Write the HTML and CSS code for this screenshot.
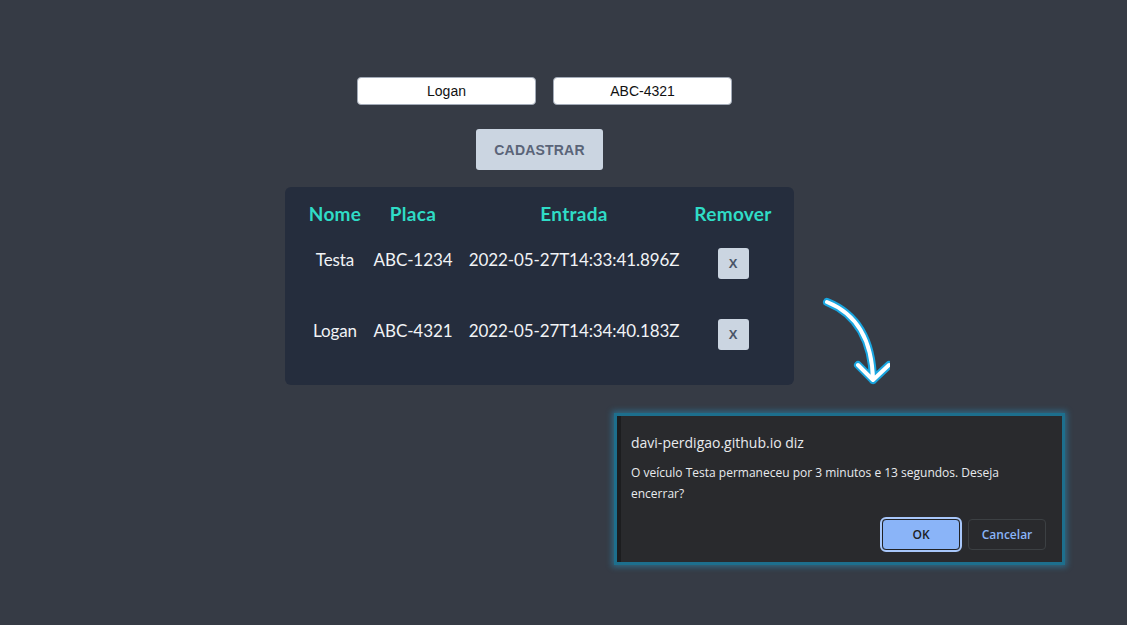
FILE: index.html
```html
<!DOCTYPE html>
<html lang="pt-BR">
<head>
<meta charset="utf-8">
<title>Estacionamento</title>
<link rel="stylesheet" href="styles.css">
</head>
<body>
<main class="page">
  <div class="form-row">
    <input class="field" type="text" value="Logan">
    <input class="field" type="text" value="ABC-4321">
  </div>
  <button class="btn-register">CADASTRAR</button>
  <section class="table">
    <div class="row head">
      <div class="cell">Nome</div>
      <div class="cell">Placa</div>
      <div class="cell">Entrada</div>
      <div class="cell">Remover</div>
    </div>
    <div class="row">
      <div class="cell">Testa</div>
      <div class="cell">ABC-1234</div>
      <div class="cell">2022-05-27T14:33:41.896Z</div>
      <div class="cell"><button class="btn-x">X</button></div>
    </div>
    <div class="row">
      <div class="cell">Logan</div>
      <div class="cell">ABC-4321</div>
      <div class="cell">2022-05-27T14:34:40.183Z</div>
      <div class="cell"><button class="btn-x">X</button></div>
    </div>
  </section>
</main>

<svg class="arrow" width="90" height="100" viewBox="0 0 90 100">
  <g fill="none" stroke-linecap="round" stroke-linejoin="round">
    <path d="M27 12 C52 22 72 44 73 90 M58 75 L73 90 L89 75" stroke="#1aa6e0" stroke-width="8"/>
    <path d="M27 12 C52 22 72 44 73 90 M58 75 L73 90 L89 75" stroke="#ffffff" stroke-width="4"/>
  </g>
</svg>

<div class="dialog">
  <div class="dialog-title">davi-perdigao.github.io diz</div>
  <div class="dialog-msg">O veículo Testa permaneceu por 3 minutos e 13 segundos. Deseja encerrar?</div>
  <div class="dialog-actions">
    <button class="btn-ok">OK</button>
    <button class="btn-cancel">Cancelar</button>
  </div>
</div>
</body>
</html>
```

FILE: styles.css
```css
html, body {
  margin: 0;
  padding: 0;
}
body {
  background: #363b45;
  width: 1127px;
  height: 625px;
  overflow: hidden;
  position: relative;
  font-family: "Liberation Sans", Arial, sans-serif;
}
.page {
  width: 1079px;
  display: flex;
  flex-direction: column;
  align-items: center;
  padding-top: 77px;
}
.form-row {
  display: flex;
  gap: 17px;
  padding-left: 10px;
}
.field {
  width: 179px;
  height: 28px;
  box-sizing: border-box;
  border: 1px solid #a3abb8;
  border-radius: 4px;
  background: #ffffff;
  text-align: center;
  font-family: "Liberation Sans", Arial, sans-serif;
  font-size: 14px;
  color: #111;
  padding: 0;
  outline: none;
}
.btn-register {
  margin-top: 24px;
  width: 127px;
  height: 41px;
  border: none;
  border-radius: 3px;
  background: #cbd5e1;
  color: #5a6478;
  font-family: "Liberation Sans", Arial, sans-serif;
  font-weight: bold;
  font-size: 14px;
  letter-spacing: 0.2px;
  padding: 0;
}
.table {
  margin-top: 17px;
  width: 509px;
  height: 198px;
  box-sizing: border-box;
  background: #252d3d;
  border-radius: 6px;
  padding: 15px 23px 0 12px;
  font-family: "Lato", "Noto Sans", sans-serif;
}
.row {
  display: grid;
  grid-template-columns: 76px 80px 242px 76px;
  align-items: start;
  color: #f1f3f6;
  font-size: 17px;
  letter-spacing: -0.1px;
  height: 71px;
}
.row.head {
  height: 46px;
  color: #2fdcc6;
  font-weight: bold;
  font-size: 19px;
  letter-spacing: 0.3px;
}
.cell {
  text-align: center;
  line-height: 24px;
  white-space: nowrap;
  display: flex;
  justify-content: center;
}
.btn-x {
  margin-top: 0;
  width: 31px;
  height: 31px;
  border: none;
  border-radius: 3px;
  background: #cbd5e1;
  color: #4a5568;
  font-family: "Liberation Sans", Arial, sans-serif;
  font-weight: bold;
  font-size: 13px;
  padding: 0;
}
.arrow {
  position: absolute;
  left: 800px;
  top: 290px;
}
.dialog {
  position: absolute;
  left: 614px;
  top: 413px;
  width: 445px;
  height: 146px;
  background: #292a2d;
  border: 3px solid #1d6f8d;
  box-shadow: 0 0 6px 2px rgba(40, 160, 210, 0.45), inset 4px 0 0 #1c1d1f;
  font-family: "Open Sans", "Noto Sans", sans-serif;
  color: #e8eaed;
}
.dialog-title {
  margin: 17px 0 0 14px;
  font-size: 14px;
  line-height: 20px;
}
.dialog-msg {
  margin: 9px 30px 0 14px;
  font-size: 12px;
  line-height: 21px;
}
.dialog-actions {
  display: flex;
  justify-content: flex-end;
  gap: 8px;
  margin: 15px 16px 0 0;
}
.btn-ok, .btn-cancel {
  width: 78px;
  height: 31px;
  border-radius: 4px;
  font-family: "Open Sans", "Noto Sans", sans-serif;
  font-size: 12px;
  font-weight: 600;
  padding: 0;
  box-sizing: border-box;
}
.btn-ok {
  background: #8ab4f8;
  color: #202124;
  border: 1px solid #202124;
  outline: 2px solid #a8c7fa;
}
.btn-cancel {
  background: transparent;
  color: #8ab4f8;
  border: 1px solid #3c4043;
}
```
